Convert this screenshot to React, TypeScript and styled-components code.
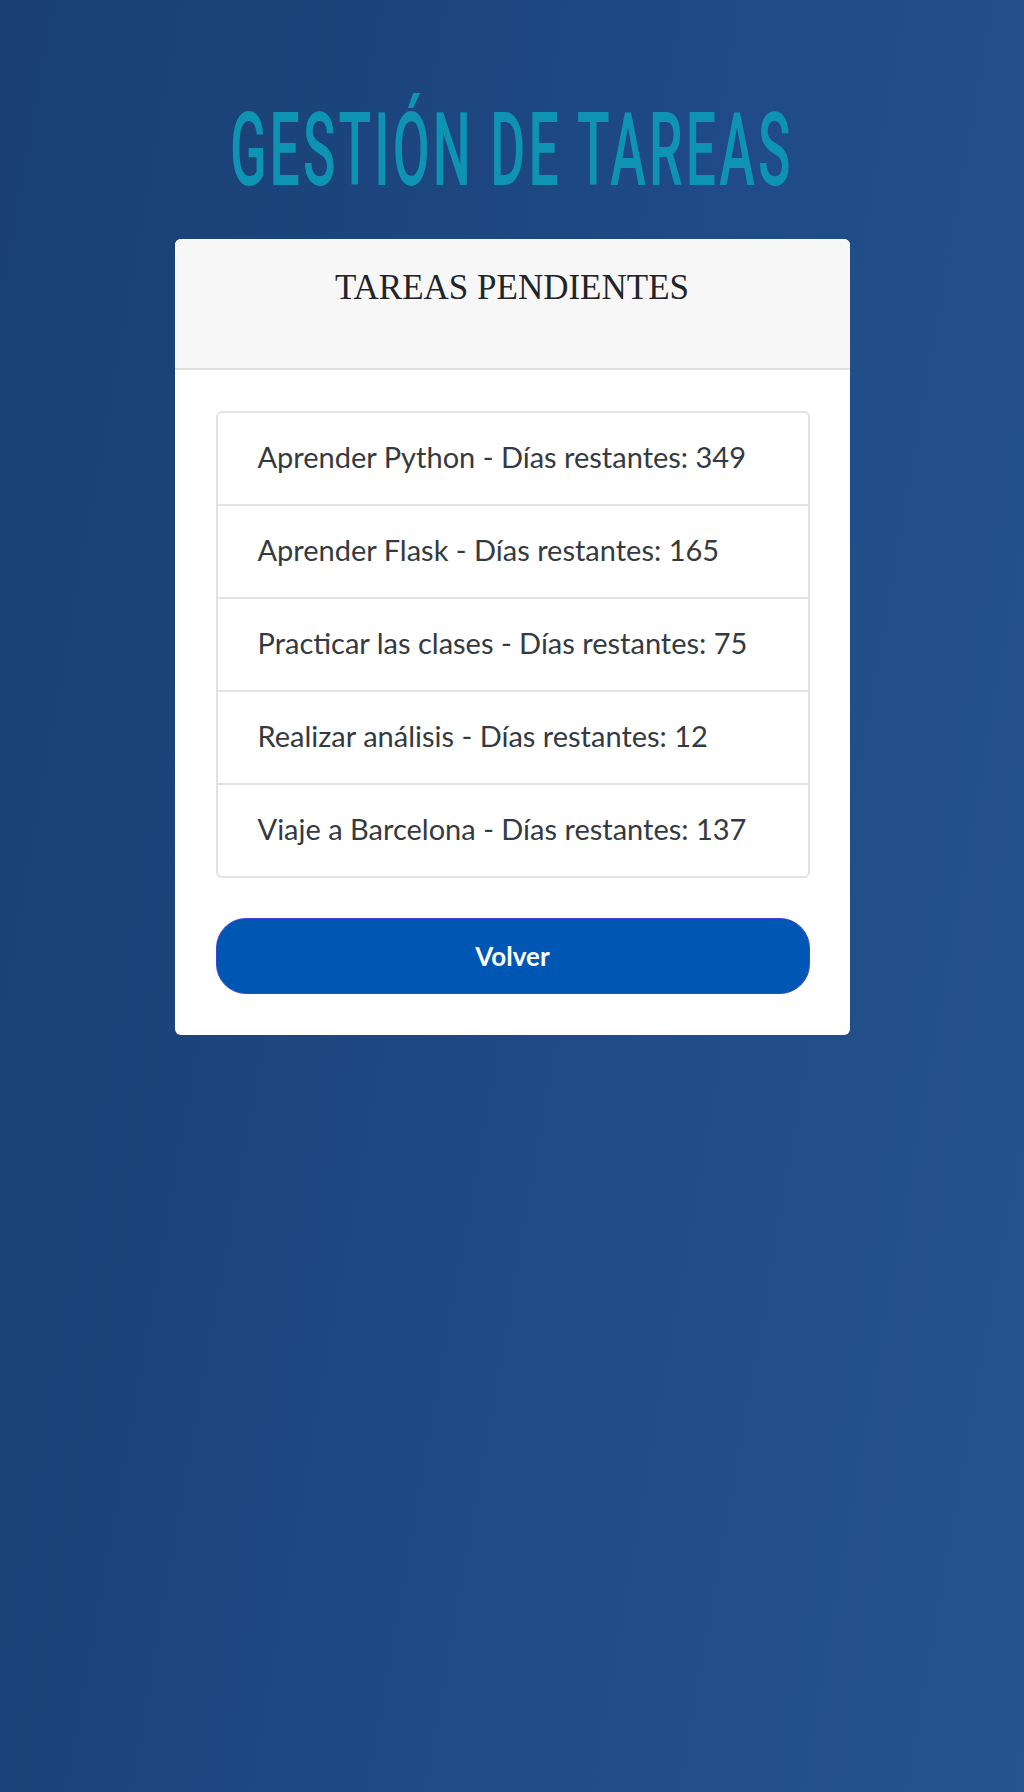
import React from 'react';
import styled, { createGlobalStyle } from 'styled-components';

interface Task {
  name: string;
  daysLeft: number;
}

const tasks: Task[] = [
  { name: 'Aprender Python', daysLeft: 349 },
  { name: 'Aprender Flask', daysLeft: 165 },
  { name: 'Practicar las clases', daysLeft: 75 },
  { name: 'Realizar análisis', daysLeft: 12 },
  { name: 'Viaje a Barcelona', daysLeft: 137 },
];

export default function App() {
  return (
    <>
      <GlobalStyle />
      <Page>
        <TitleWrap>
          <Title>GESTIÓN DE TAREAS</Title>
        </TitleWrap>

        <Card>
          <CardHeader>
            <CardTitle>TAREAS PENDIENTES</CardTitle>
          </CardHeader>
          <CardBody>
            <TaskList>
              {tasks.map((task) => (
                <TaskItem key={task.name}>
                  {task.name} - Días restantes: {task.daysLeft}
                </TaskItem>
              ))}
            </TaskList>
            <BackButton type="button">Volver</BackButton>
          </CardBody>
        </Card>
      </Page>
    </>
  );
}

const GlobalStyle = createGlobalStyle`
  html, body {
    margin: 0;
    padding: 0;
  }
  body {
    min-height: 1792px;
    background: linear-gradient(100deg, #193f74 0%, #1f4a85 55%, #25548f 100%);
    font-family: Lato, 'Open Sans', sans-serif;
  }
`;

const Page = styled.main`
  display: flex;
  flex-direction: column;
  align-items: center;
  padding-top: 99px;
  min-height: 1792px;
  box-sizing: border-box;
`;

const TitleWrap = styled.div`
  height: 102px;
  display: flex;
  justify-content: center;
  margin-bottom: 38px;
`;

const Title = styled.h1`
  margin: 0;
  font-family: Roboto, 'Liberation Sans', sans-serif;
  font-weight: 500;
  font-size: 102px;
  line-height: 1;
  letter-spacing: 6px;
  color: #0e93b3;
  white-space: nowrap;
  transform: scaleX(0.525);
  transform-origin: center;
`;

const Card = styled.section`
  width: 675px;
  background-color: #ffffff;
  border-radius: 6px;
  overflow: hidden;
`;

const CardHeader = styled.header`
  height: 131px;
  box-sizing: border-box;
  padding: 28px 20px 0;
  background-color: #f7f7f7;
  border-bottom: 2px solid #dfdfdf;
  text-align: center;
`;

const CardTitle = styled.h2`
  margin: 0;
  font-family: 'Liberation Serif', 'Times New Roman', serif;
  font-weight: 400;
  font-size: 35px;
  line-height: 1.2;
  color: #212529;
`;

const CardBody = styled.div`
  padding: 41px 40px 41px 41px;
  display: flex;
  flex-direction: column;
  gap: 40px;
`;

const TaskList = styled.ul`
  list-style: none;
  margin: 0;
  padding: 0;
  border: 2px solid #e3e3e3;
  border-radius: 6px;
`;

const TaskItem = styled.li`
  height: 91px;
  display: flex;
  align-items: center;
  padding: 0 0 4px 40px;
  box-sizing: border-box;
  font-size: 29px;
  color: #343a40;
  & + & {
    border-top: 2px solid #e3e3e3;
    height: 93px;
  }
`;

const BackButton = styled.button`
  height: 76px;
  width: 100%;
  border: 1px solid #3d45d6;
  border-radius: 30px;
  background-color: #0057b3;
  color: #ffffff;
  font-family: Lato, 'Open Sans', sans-serif;
  font-size: 26px;
  font-weight: 700;
  cursor: pointer;
`;
